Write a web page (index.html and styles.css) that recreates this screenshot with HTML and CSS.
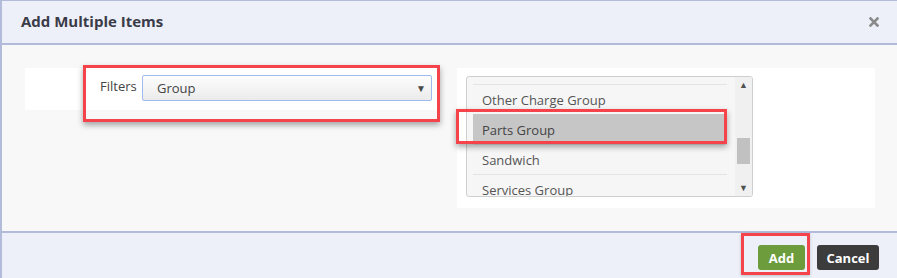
FILE: index.html
```html
<!DOCTYPE html>
<html lang="en">
<head>
    <meta charset="UTF-8">
    <title>Add Multiple Items</title>
    <link rel="stylesheet" href="styles.css">
</head>
<body>
    <div class="modal">
        <header class="modal-header">
            <h1>Add Multiple Items</h1>
            <button class="close" aria-label="Close">
                <svg width="10" height="10" viewBox="0 0 10 10">
                    <path d="M1.5 1.5 L8.5 8.5 M8.5 1.5 L1.5 8.5" stroke="#8a8a8a" stroke-width="2.6" stroke-linecap="square"/>
                </svg>
            </button>
        </header>

        <section class="modal-body">
            <div class="panel filter-panel">
                <label class="filter-label" for="filter">Filters</label>
                <div class="select">
                    <span>Group</span>
                    <span class="caret">&#9660;</span>
                </div>
                <span class="mark mark-filter"></span>
            </div>

            <div class="panel list-panel">
                <div class="listbox">
                    <ul class="options">
                        <li>Other Charge Group</li>
                        <li class="selected">Parts Group</li>
                        <li>Sandwich</li>
                        <li>Services Group</li>
                    </ul>
                    <div class="scrollbar">
                        <span class="arrow">&#9650;</span>
                        <span class="thumb"></span>
                        <span class="arrow">&#9660;</span>
                    </div>
                </div>
                <span class="mark mark-option"></span>
            </div>
        </section>

        <footer class="modal-footer">
            <div class="add-wrap">
                <button class="btn btn-add">Add</button>
                <span class="mark mark-add"></span>
            </div>
            <button class="btn btn-cancel">Cancel</button>
        </footer>
    </div>
</body>
</html>
```

FILE: styles.css
```css
* {
    margin: 0;
    padding: 0;
    box-sizing: border-box;
}

body {
    font-family: 'Open Sans', 'Noto Sans', sans-serif;
    font-size: 13px;
    color: #555;
    background-color: #f8f8f8;
}

.modal {
    width: 897px;
    height: 278px;
    border-left: 2px solid #b3bbdb;
    border-top: 1px solid #b3bbdb;
    display: flex;
    flex-direction: column;
}

.modal-header {
    height: 44px;
    background-color: #edf0f9;
    border-bottom: 2px solid #b3bbdb;
    display: flex;
    align-items: center;
    justify-content: space-between;
    padding: 0 18px 0 19px;
}

.modal-header h1 {
    font-size: 15px;
    font-weight: 700;
    color: #3a3b48;
    margin-top: -2px;
}

.close {
    border: none;
    background: none;
    width: 10px;
    height: 10px;
    display: flex;
    margin-top: -1px;
}

.modal-body {
    height: 186px;
    background-color: #f8f8f8;
    display: flex;
    align-items: flex-start;
    gap: 20px;
    padding: 23px 0 0 23px;
}

.panel {
    background-color: #fff;
    position: relative;
}

.filter-panel {
    width: 412px;
    height: 42px;
    display: flex;
    align-items: flex-start;
    padding: 7px 0 0 75px;
}

.filter-label {
    color: #444;
    font-size: 13px;
    line-height: 20px;
    width: 42px;
    margin-top: 1px;
}

.select {
    width: 290px;
    height: 26px;
    border: 1px solid #9fbaf0;
    border-radius: 2px;
    background: linear-gradient(#fdfdfd, #ebebeb);
    display: flex;
    align-items: center;
    justify-content: space-between;
    padding: 0 5px 0 14px;
    color: #444;
}

.caret {
    font-size: 10px;
    color: #4a4a4a;
}

.list-panel {
    width: 418px;
    height: 140px;
    padding: 8px 0 0 9px;
}

.listbox {
    width: 287px;
    height: 121px;
    border: 1px solid #cfcfcf;
    border-radius: 3px;
    background-color: #f6f6f6;
    display: flex;
    justify-content: space-between;
    overflow: hidden;
}

.options {
    list-style: none;
    width: 254px;
    margin-left: 6px;
    padding-top: 7px;
}

.options li {
    height: 30px;
    line-height: 30px;
    border-top: 1px solid #e4e4e4;
    padding-left: 9px;
    color: #555;
}

.options li.selected {
    background-color: #c6c6c6;
    border-top-color: #c6c6c6;
    color: #444;
}

.scrollbar {
    width: 17px;
    background-color: #f0f0f0;
    display: flex;
    flex-direction: column;
    align-items: center;
    justify-content: space-between;
    padding: 2px 0 2px;
}

.arrow {
    font-size: 9px;
    line-height: 12px;
    color: #505050;
}

.thumb {
    width: 13px;
    height: 26px;
    background-color: #c1c1c1;
    margin-top: 28px;
}

.modal-footer {
    flex: 1;
    background-color: #edf0f9;
    border-top: 2px solid #b3bbdb;
    display: flex;
    justify-content: flex-end;
    align-items: flex-start;
    gap: 12px;
    padding: 12px 18px 0 0;
}

.add-wrap {
    position: relative;
    display: flex;
}

.btn {
    height: 25px;
    border: none;
    border-radius: 3px;
    color: #fff;
    font-family: inherit;
    font-size: 13px;
    font-weight: 700;
}

.btn-add {
    width: 47px;
    background-color: #6c9c3b;
}

.btn-cancel {
    width: 62px;
    background-color: #3c3c3c;
}

/* red annotation boxes laid over the screenshot */
.mark {
    position: absolute;
    border: 3px solid #f4434a;
    box-shadow: 0 3px 6px rgba(0, 0, 0, 0.35);
    pointer-events: none;
}

.mark-filter {
    left: 58px;
    top: -3px;
    width: 357px;
    height: 57px;
}

.mark-option {
    left: -1px;
    top: 41px;
    width: 271px;
    height: 35px;
}

.mark-add {
    left: -17px;
    top: -12px;
    width: 69px;
    height: 42px;
    box-shadow: 0 1px 3px rgba(0, 0, 0, 0.2);
}
```
